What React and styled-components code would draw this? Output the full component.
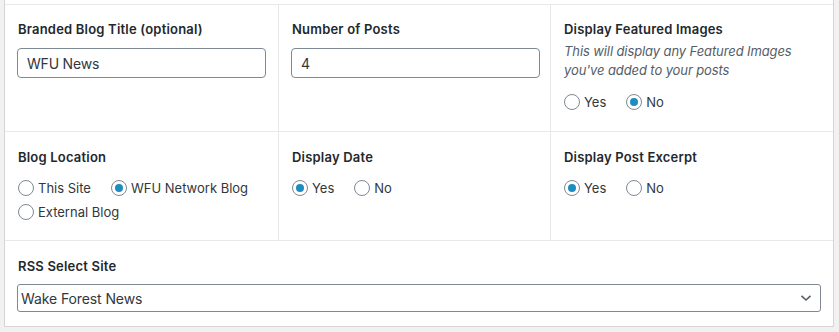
import React from 'react';
import styled, { createGlobalStyle } from 'styled-components';

const GlobalStyle = createGlobalStyle`
  body {
    margin: 0;
    background: #f1f1f1;
    font-family: Inter, "Noto Sans", sans-serif;
    color: #32373c;
  }
`;

const Panel = styled.div`
  width: 828px;
  margin-left: 4px;
  padding-top: 4px;
  background: #fff;
  border: 1px solid #d5d5d5;
  border-top: 0;
`;

const Row = styled.div`
  display: grid;
  grid-template-columns: 273px 272px 1fr;
  border-top: 1px solid #e8e8e8;
  min-height: ${(p) => p.height}px;
`;

const Cell = styled.div`
  padding: ${(p) => p.top || 15}px 13px 12px;
  border-left: ${(p) => (p.first ? '0' : '1px solid #e8e8e8')};
  grid-column: ${(p) => (p.wide ? '1 / -1' : 'auto')};
`;

const Label = styled.div`
  font-size: 13px;
  font-weight: 600;
  letter-spacing: 0.2px;
  line-height: 18px;
  color: #23282d;
  margin-bottom: ${(p) => p.gap || 10}px;
`;

const Hint = styled.p`
  margin: -6px 0 0;
  font-size: 13px;
  font-style: italic;
  letter-spacing: -0.1px;
  line-height: 19px;
  color: #555d66;
`;

const TextInput = styled.input`
  box-sizing: border-box;
  display: block;
  width: 249px;
  height: 30px;
  margin-left: -1px;
  padding: 0 9px;
  border: 1px solid #7e8993;
  border-radius: 4px;
  font-family: inherit;
  font-size: 14px;
  letter-spacing: -0.2px;
  color: #32373c;
  outline: none;
`;

const SelectBox = styled.div`
  box-sizing: border-box;
  display: flex;
  align-items: center;
  justify-content: space-between;
  width: 804px;
  height: 28px;
  margin-left: -1px;
  padding: 0 8px 0 3px;
  border: 1px solid #7e8993;
  border-radius: 3px;
  font-size: 14px;
  letter-spacing: -0.1px;
  color: #32373c;
`;

const Choices = styled.div`
  display: flex;
  flex-wrap: wrap;
  column-gap: 20px;
  margin-top: ${(p) => p.top || 0}px;
`;

const Choice = styled.label`
  display: flex;
  align-items: center;
  height: 24px;
  font-size: 13px;
  color: #32373c;
`;

const Dot = styled.span`
  box-sizing: border-box;
  width: 16px;
  height: 16px;
  margin-right: 4px;
  border-radius: 50%;
  border: 1px solid #7e8993;
  display: flex;
  align-items: center;
  justify-content: center;
  &::after {
    content: '';
    width: 8px;
    height: 8px;
    border-radius: 50%;
    background: ${(p) => (p.on ? '#1e8cbe' : 'transparent')};
  }
`;

const Radio = ({ on, children }) => (
  <Choice>
    <Dot on={on ? 1 : 0} />
    {children}
  </Choice>
);

const Chevron = () => (
  <svg width="12" height="8" viewBox="0 0 12 8">
    <path d="M1.5 1.8 L6 6 L10.5 1.8" fill="none" stroke="#555d66" strokeWidth="1.6" />
  </svg>
);

export default function App() {
  return (
    <>
      <GlobalStyle />
      <Panel>
        <Row height={126}>
          <Cell first>
            <Label>Branded Blog Title (optional)</Label>
            <TextInput defaultValue="WFU News" />
          </Cell>
          <Cell>
            <Label>Number of Posts</Label>
            <TextInput defaultValue="4" />
          </Cell>
          <Cell>
            <Label>Display Featured Images</Label>
            <Hint>
              This will display any Featured Images
              <br />
              you've added to your posts
            </Hint>
            <Choices top={10}>
              <Radio>Yes</Radio>
              <Radio on>No</Radio>
            </Choices>
          </Cell>
        </Row>
        <Row height={108}>
          <Cell first top={16}>
            <Label>Blog Location</Label>
            <Choices>
              <Radio>This Site</Radio>
              <Radio on>WFU Network Blog</Radio>
              <Radio>External Blog</Radio>
            </Choices>
          </Cell>
          <Cell top={16}>
            <Label>Display Date</Label>
            <Choices>
              <Radio on>Yes</Radio>
              <Radio>No</Radio>
            </Choices>
          </Cell>
          <Cell top={16}>
            <Label>Display Post Excerpt</Label>
            <Choices>
              <Radio on>Yes</Radio>
              <Radio>No</Radio>
            </Choices>
          </Cell>
        </Row>
        <Row height={85}>
          <Cell first wide top={16}>
            <Label gap={9}>RSS Select Site</Label>
            <SelectBox>
              Wake Forest News
              <Chevron />
            </SelectBox>
          </Cell>
        </Row>
      </Panel>
    </>
  );
}
